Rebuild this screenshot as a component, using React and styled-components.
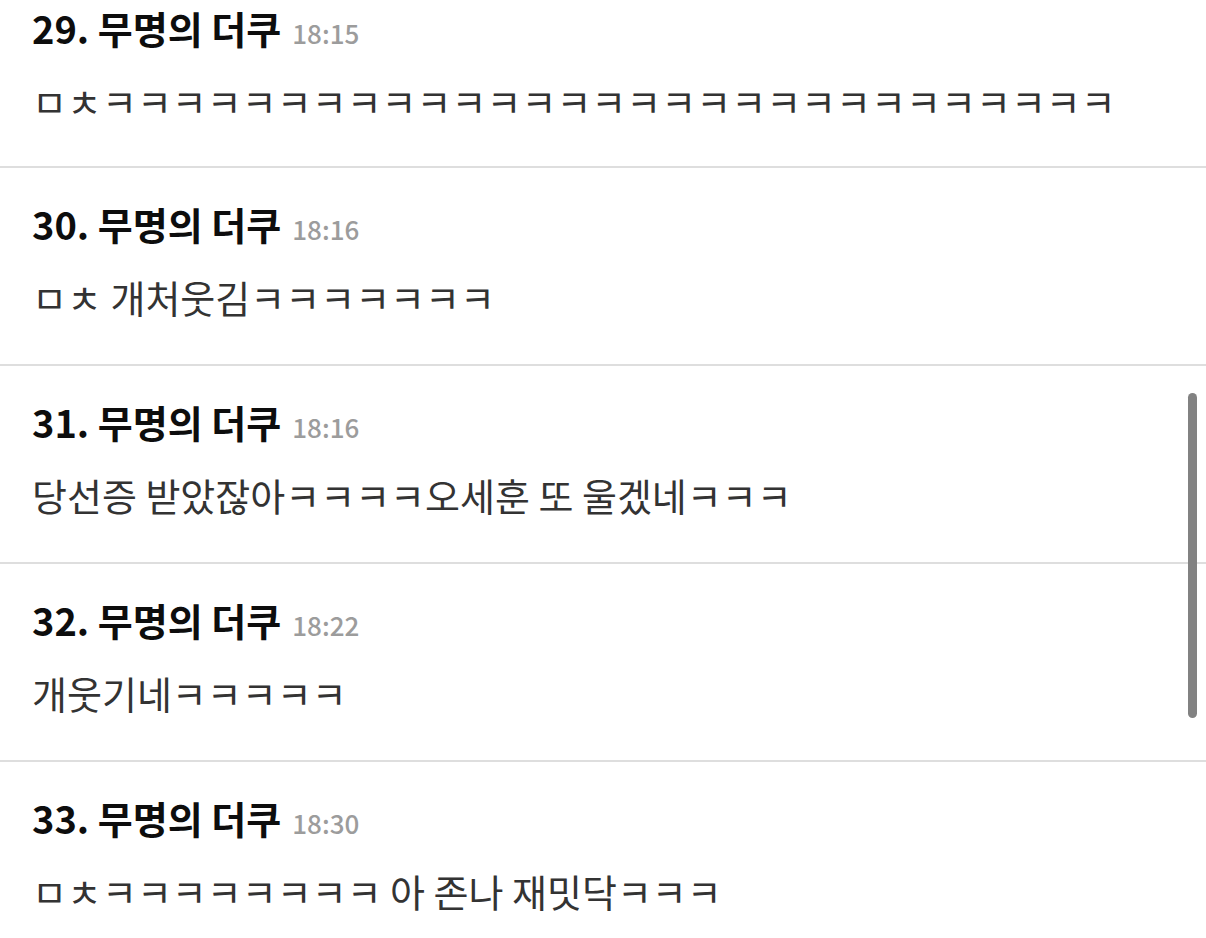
import React from "react";
import styled, { createGlobalStyle } from "styled-components";

const GlobalStyle = createGlobalStyle`
  html, body {
    margin: 0;
    padding: 0;
    background: #ffffff;
    overflow: hidden;
  }
  body {
    font-family: "Noto Sans CJK KR", "Noto Sans", sans-serif;
  }
`;

const Page = styled.div`
  position: relative;
  width: 1206px;
  height: 938px;
  overflow: hidden;
  background: #fff;
`;

/* list is scrolled: the first comment is partly above the top edge */
const List = styled.ul`
  list-style: none;
  margin: -28px 0 0;
  padding: 0;
`;

const Item = styled.li`
  display: flex;
  flex-direction: column;
  gap: 25px;
  padding: 32px 32px 43px;
  border-bottom: 2px solid #dedede;

  &:first-child {
    padding-bottom: 41px;
  }
`;

const Head = styled.div`
  display: flex;
  align-items: baseline;
  gap: 11px;
  height: 48px;
  line-height: 48px;
`;

const Name = styled.span`
  font-size: 38px;
  font-weight: 700;
  color: #0d0d0d;
`;

const Time = styled.span`
  font-size: 26px;
  font-weight: 500;
  color: #9c9c9c;
`;

const Body = styled.p`
  margin: 0;
  font-size: 38px;
  line-height: 48px;
  height: 48px;
  color: #333;
  white-space: nowrap;
`;

const ScrollThumb = styled.div`
  position: absolute;
  top: 393px;
  right: 9px;
  width: 9px;
  height: 325px;
  border-radius: 5px;
  background: #828282;
`;

const comments = [
  { no: 29, time: "18:15", text: "ㅁㅊㅋㅋㅋㅋㅋㅋㅋㅋㅋㅋㅋㅋㅋㅋㅋㅋㅋㅋㅋㅋㅋㅋㅋㅋㅋㅋㅋㅋㅋ" },
  { no: 30, time: "18:16", text: "ㅁㅊ 개처웃김ㅋㅋㅋㅋㅋㅋㅋ" },
  { no: 31, time: "18:16", text: "당선증 받았잖아ㅋㅋㅋㅋ오세훈 또 울겠네ㅋㅋㅋ" },
  { no: 32, time: "18:22", text: "개웃기네ㅋㅋㅋㅋㅋ" },
  { no: 33, time: "18:30", text: "ㅁㅊㅋㅋㅋㅋㅋㅋㅋㅋ 아 존나 재밋닥ㅋㅋㅋ" },
];

const App = () => {
  return (
    <Page>
      <GlobalStyle />
      <List>
        {comments.map((c) => (
          <Item key={c.no}>
            <Head>
              <Name>{c.no}. 무명의 더쿠</Name>
              <Time>{c.time}</Time>
            </Head>
            <Body>{c.text}</Body>
          </Item>
        ))}
      </List>
      <ScrollThumb />
    </Page>
  );
};

export default App;
